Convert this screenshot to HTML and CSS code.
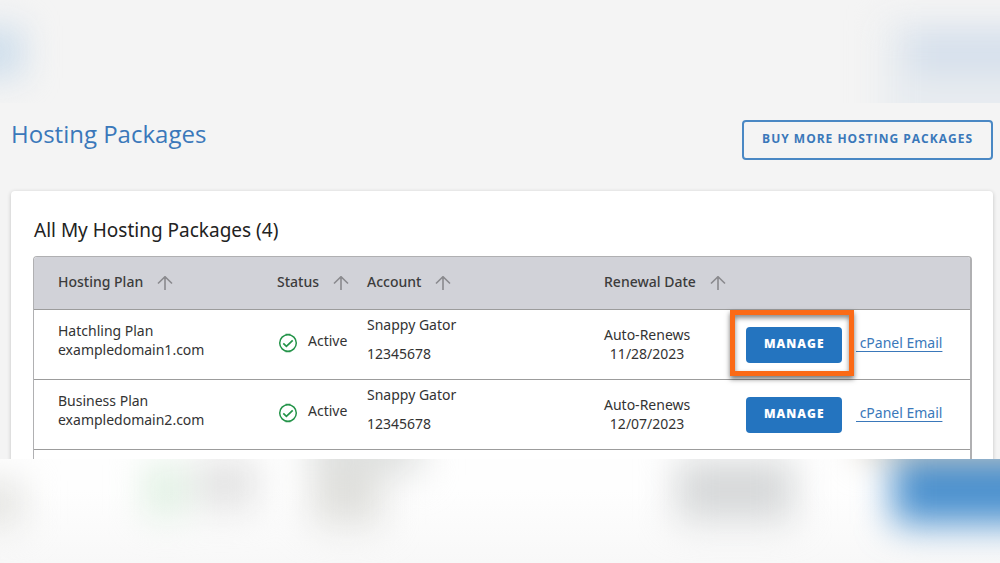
FILE: index.html
```html
<!DOCTYPE html>
<html lang="en">
<head>
<meta charset="utf-8">
<meta name="viewport" content="width=device-width, initial-scale=1">
<title>Hosting Packages</title>
<link rel="stylesheet" href="styles.css">
</head>
<body>
<svg class="defs" width="0" height="0" aria-hidden="true">
  <symbol id="arrow-up" viewBox="0 0 16 16"><path d="M8 14V1M1 7.500L8 .700l7 6.800" fill="none" stroke="currentColor" stroke-width="1.600"/></symbol>
  <symbol id="check-circle" viewBox="0 0 20 20"><circle cx="10" cy="10" r="8.300" fill="none" stroke="currentColor" stroke-width="1.500"/><path d="M7.500 1.300h5M7.500 18.700h5" stroke="currentColor" stroke-width="1.200"/><path d="M5.300 10.300l3.100 3 6.300-6" fill="none" stroke="currentColor" stroke-width="1.700"/></symbol>
</svg>
<div class="page">
  <svg class="band band-top" viewBox="0 0 1000 103" preserveAspectRatio="none" aria-hidden="true">
    <defs><filter id="haze" filterUnits="userSpaceOnUse" x="-150" y="-150" width="1300" height="420" color-interpolation-filters="sRGB"><feGaussianBlur stdDeviation="16"/></filter></defs>
    <g filter="url(#haze)">
      <rect x="-80" y="26" width="104" height="52" fill="#d0dfec"/>
    </g>
    <g filter="url(#haze)">
      <rect x="882" y="20" width="218" height="160" fill="#e8ecf0"/>
      <rect x="910" y="30" width="190" height="46" fill="#d6e0ec"/>
    </g>
  </svg>
  <main class="content">
    <header class="heading">
      <h1 class="title">Hosting Packages</h1>
      <button class="btn btn-outline" type="button">BUY MORE HOSTING PACKAGES</button>
    </header>
    <section class="card">
      <h2 class="subtitle">All My Hosting Packages (4)</h2>
      <div class="frame">
      <table class="packages">
        <colgroup><col class="c-plan"><col class="c-status"><col class="c-account"><col class="c-renewal"><col class="c-manage"><col class="c-email"></colgroup>
        <thead>
          <tr>
            <th>Hosting Plan<svg class="arrow" aria-hidden="true"><use href="#arrow-up"/></svg></th>
            <th>Status<svg class="arrow" aria-hidden="true"><use href="#arrow-up"/></svg></th>
            <th>Account<svg class="arrow" aria-hidden="true"><use href="#arrow-up"/></svg></th>
            <th colspan="3">Renewal Date<svg class="arrow" aria-hidden="true"><use href="#arrow-up"/></svg></th>
          </tr>
        </thead>
        <tbody>
          <tr>
            <td class="plan">Hatchling Plan<br>exampledomain1.com</td>
            <td><span class="status"><svg class="check" aria-hidden="true"><use href="#check-circle"/></svg><span class="state">Active</span></span></td>
            <td class="account">Snappy Gator<br>12345678</td>
            <td class="date"><span class="renewal">Auto-Renews<br>11/28/2023</span></td>
            <td><span class="target"><button class="btn btn-solid" type="button">MANAGE</button></span></td>
            <td class="email"><a class="link" href="#">&nbsp;cPanel Email</a></td>
          </tr>
          <tr>
            <td class="plan">Business Plan<br>exampledomain2.com</td>
            <td><span class="status"><svg class="check" aria-hidden="true"><use href="#check-circle"/></svg><span class="state">Active</span></span></td>
            <td class="account">Snappy Gator<br>12345678</td>
            <td class="date"><span class="renewal">Auto-Renews<br>12/07/2023</span></td>
            <td><button class="btn btn-solid" type="button">MANAGE</button></td>
            <td class="email"><a class="link" href="#">&nbsp;cPanel Email</a></td>
          </tr>
          <tr><td colspan="6"></td></tr>
        </tbody>
      </table>
      </div>
    </section>
  </main>
  <svg class="band band-bottom" viewBox="0 0 1000 104" preserveAspectRatio="none" aria-hidden="true">
    <defs>
      <linearGradient id="fade" x1="0" y1="0" x2="0" y2="1"><stop offset="0.300" stop-color="#fefefe"/><stop offset="1" stop-color="#f8f8f8"/></linearGradient>
      <filter id="soft" filterUnits="userSpaceOnUse" x="-150" y="-150" width="1300" height="420" color-interpolation-filters="sRGB"><feGaussianBlur stdDeviation="18"/></filter>
    </defs>
    <rect width="1000" height="104" fill="url(#fade)"/>
    <g filter="url(#soft)">
      <rect x="-80" y="22" width="104" height="44" fill="#e4e4e1"/>
      <rect x="146" y="6" width="38" height="50" fill="#dcefdf"/>
      <rect x="195" y="0" width="62" height="50" fill="#e2e2e2"/>
      <rect x="310" y="-40" width="112" height="56" fill="#dfe1e0"/>
      <rect x="312" y="6" width="70" height="60" fill="#dfdfdc"/>
      <rect x="676" y="0" width="118" height="62" fill="#d6d8d9"/>
      <rect x="860" y="-62" width="240" height="60" fill="#d5cec2"/>
      <rect x="893" y="-1" width="207" height="66" fill="#4a90ce"/>
    </g>
  </svg>
</div>
</body>
</html>
```
FILE: styles.css
```css
* { box-sizing: border-box; }
body {
  margin: 0;
  background: #f4f4f4;
  color: #333;
  font: 14px/19px "Noto Sans", "Open Sans", sans-serif;
}
.defs { position: absolute; }
.page { display: flex; flex-direction: column; height: 100vh; overflow: hidden; }
.band { display: block; flex: none; width: 100%; height: 104px; }
.band-top { height: 103px; }
.content { flex: 1; min-height: 0; overflow: hidden; padding: 17px 7px 0 11px; }
.heading { display: flex; justify-content: space-between; align-items: flex-start; margin-bottom: 31px; }
.title { margin: 0; color: #3a78ba; font-family: "Open Sans", sans-serif; font-size: 24px; font-weight: 400; line-height: 28px; }
.btn { font-family: "Open Sans", sans-serif; font-weight: 700; font-size: 12px; line-height: 16px; letter-spacing: 1px; border-radius: 4px; cursor: pointer; }
.btn-outline { padding: 9px 18px 11px; border: 2px solid #4a88c4; background: transparent; color: #3a78ba; }
.card { padding: 27px 21px 27px 22px; background: #fff; border-radius: 4px; box-shadow: 0 1px 4px #0003; }
.subtitle { margin: 0 0 14px 1px; color: #222; font-size: 19px; line-height: 24px; font-weight: 400; }
.frame { border: 2px solid #b0b0b2; border-width: 1px 2px 1px 1px; border-radius: 4px; overflow: hidden; }
.packages { width: 100%; table-layout: fixed; border-collapse: separate; border-spacing: 0; }
.c-plan { width: 243px; }
.c-status { width: 90px; }
.c-account { width: 237px; }
.c-renewal { width: 142px; }
.c-manage { width: 110px; }
th { height: 52px; padding: 0 0 2px; background: #d1d2d8; text-align: left; font-weight: 500; color: #3c3c3c; white-space: nowrap; }
th:first-child, td.plan { padding-left: 24px; }
td { height: 70px; padding: 0; border-top: 1px solid #9c9c9c; white-space: nowrap; }
.arrow { width: 16px; height: 16px; margin-left: 14px; color: #8a8a8e; vertical-align: middle; }
.plan { padding-bottom: 10px; }
.status { display: flex; align-items: center; gap: 10px; padding-bottom: 4px; margin-left: 1px; }
.state { padding-bottom: 4px; }
.check { width: 20px; height: 20px; color: #25944a; }
.account { padding-bottom: 11px; line-height: 29px; }
.date { padding-bottom: 2px; }
.renewal { display: inline-block; text-align: center; }
.btn-solid { padding: 9px 17px 11px 18px; border: 0; background: #2474bf; color: #fff; font-weight: 800; }
.target { position: relative; display: inline-block; }
.target::after {
  content: "";
  position: absolute;
  inset: -17px -12px -13px -16px;
  border: 5px solid #fb6a17;
  box-shadow: 0 3px 5px #0008, inset 0 3px 5px #0007;
  pointer-events: none;
}
.email { padding-bottom: 4px; }
.link { color: #3a78ba; text-underline-offset: 3px; }
```
